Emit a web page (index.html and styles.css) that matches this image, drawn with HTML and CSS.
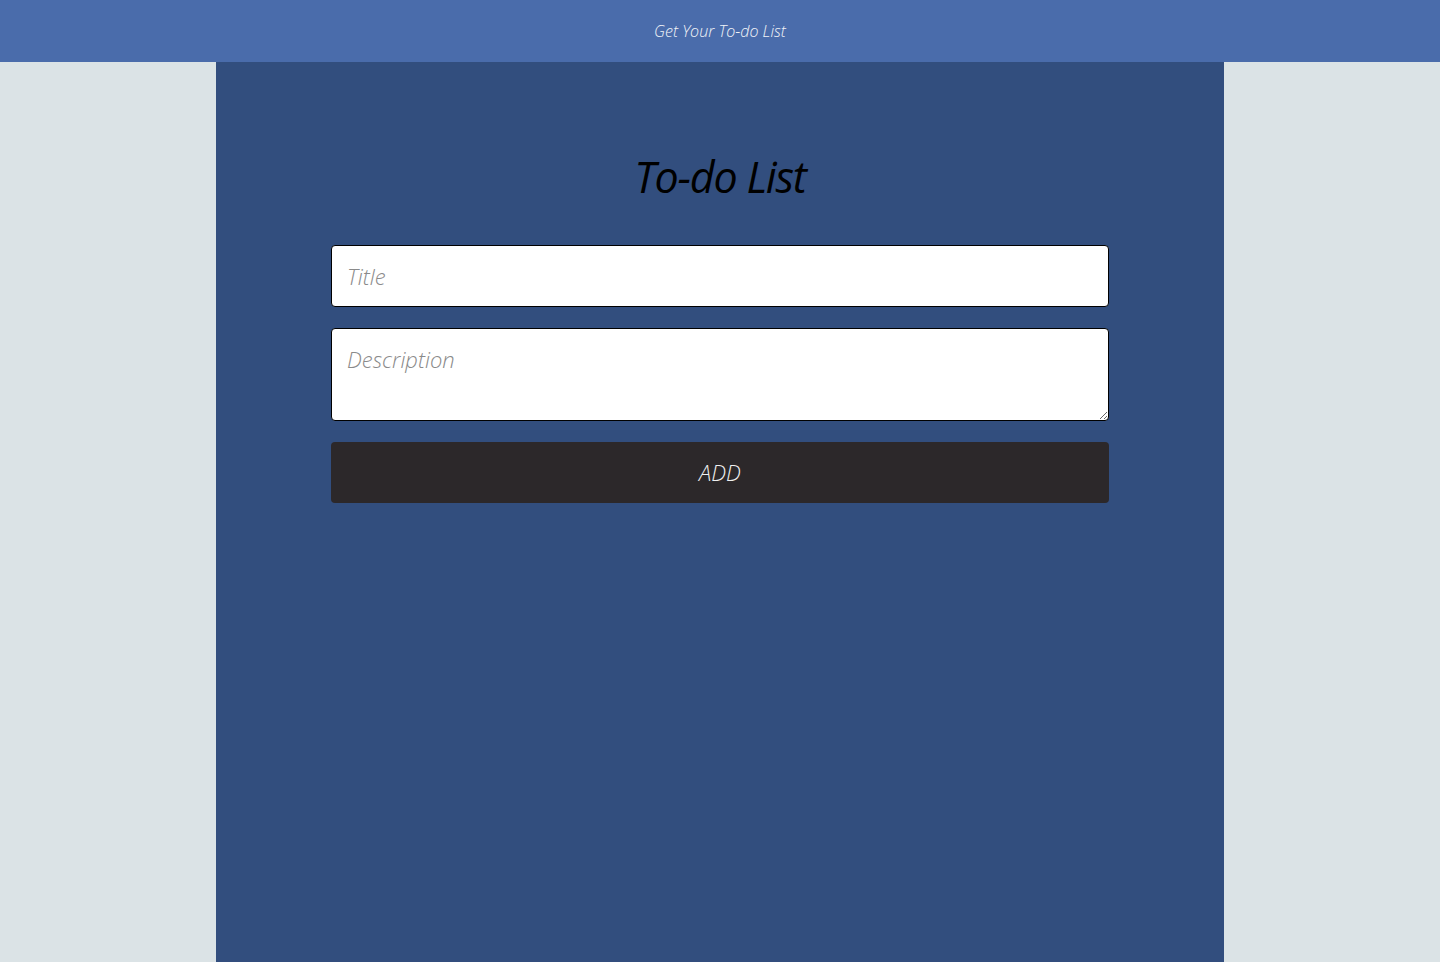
FILE: index.html
```html
<!DOCTYPE html>
<html lang="en">
<head>
<meta charset="utf-8">
<title>To-do List</title>
<link rel="stylesheet" href="styles.css">
</head>
<body>
<header class="topbar">Get Your To-do List</header>
<main class="panel">
  <h1 class="heading">To-do List</h1>
  <form class="todo-form">
    <input class="field field-title" type="text" placeholder="Title">
    <textarea class="field field-desc" placeholder="Description"></textarea>
    <button class="add-btn" type="button">ADD</button>
  </form>
</main>
</body>
</html>
```
FILE: styles.css
```css
html, body {
  margin: 0;
  padding: 0;
  height: 100%;
}
body {
  background: #dbe3e6;
  font-family: "Open Sans", "Liberation Sans", sans-serif;
  display: flex;
  flex-direction: column;
  align-items: center;
}
.topbar {
  align-self: stretch;
  height: 62px;
  background: #4a6cab;
  color: #f2f4f8;
  font-style: italic;
  font-weight: 300;
  font-size: 16px;
  display: flex;
  align-items: center;
  justify-content: center;
}
.panel {
  width: 1008px;
  flex: 1;
  background: #324e7e;
  display: flex;
  flex-direction: column;
  align-items: center;
  padding-top: 88px;
  box-sizing: border-box;
}
.heading {
  margin: 0;
  font-size: 43px;
  font-style: italic;
  font-weight: 400;
  color: #000;
  line-height: 54px;
  letter-spacing: -1.2px;
}
.todo-form {
  width: 778px;
  margin-top: 41px;
  display: flex;
  flex-direction: column;
  gap: 21px;
}
.field {
  box-sizing: border-box;
  width: 100%;
  border: 1px solid #000;
  border-radius: 4px;
  background: #fff;
  font-family: "Open Sans", "Liberation Sans", sans-serif;
  font-style: italic;
  font-weight: 300;
  font-size: 22px;
  padding: 0 15px;
  margin: 0;
  color: #333;
  outline: none;
}
.field::placeholder {
  color: #8a8a8a;
}
.field-title {
  height: 62px;
}
.field-desc {
  height: 93px;
  padding-top: 15px;
  resize: vertical;
  display: block;
}
.add-btn {
  height: 61px;
  border: none;
  border-radius: 4px;
  background: #2c282a;
  color: #f0f0f0;
  font-family: "Open Sans", "Liberation Sans", sans-serif;
  font-style: italic;
  font-weight: 300;
  font-size: 22px;
  padding: 0 0 2px;
  cursor: pointer;
}
```
